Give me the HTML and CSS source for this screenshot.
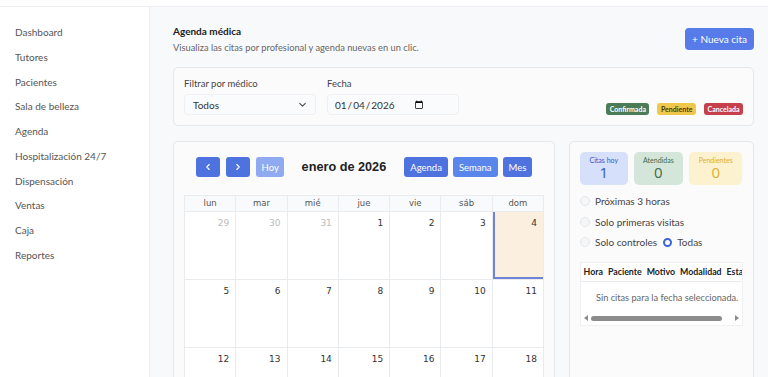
FILE: index.html
```html
<!DOCTYPE html>
<html lang="es">
<head>
  <meta charset="UTF-8">
  <meta name="viewport" content="width=device-width, initial-scale=1.0">
  <title>Agenda médica</title>
  <link rel="stylesheet" href="styles.css">
</head>
<body>
  <div class="topbar"></div>

  <div class="layout">
    <!-- Menú lateral -->
    <aside class="sidebar">
      <a href="#">Dashboard</a>
      <a href="#">Tutores</a>
      <a href="#">Pacientes</a>
      <a href="#">Sala de belleza</a>
      <a href="#">Agenda</a>
      <a href="#">Hospitalización 24/7</a>
      <a href="#">Dispensación</a>
      <a href="#">Ventas</a>
      <a href="#">Caja</a>
      <a href="#">Reportes</a>
    </aside>

    <main class="content">
      <!-- Cabecera -->
      <header class="page-head">
        <div>
          <h1>Agenda médica</h1>
          <p>Visualiza las citas por profesional y agenda nuevas en un clic.</p>
        </div>
        <button class="btn btn-new">+ Nueva cita</button>
      </header>

      <!-- Filtros -->
      <section class="card filters">
        <div class="field">
          <label>Filtrar por médico</label>
          <div class="select">
            <span>Todos</span>
            <svg width="9" height="9" viewBox="0 0 16 16"><path d="M3 6l5 5 5-5" fill="none" stroke="#444" stroke-width="1.8" stroke-linecap="round" stroke-linejoin="round"/></svg>
          </div>
        </div>
        <div class="field">
          <label>Fecha</label>
          <input class="date" type="date" value="2026-01-04">
        </div>
        <div class="legend">
          <span class="badge confirmed">Confirmada</span>
          <span class="badge pending">Pendiente</span>
          <span class="badge cancelled">Cancelada</span>
        </div>
      </section>

      <div class="agenda-row">
        <!-- Calendario -->
        <section class="card calendar">
          <div class="toolbar">
            <div class="group">
              <button class="btn btn-sq"><svg width="8" height="8" viewBox="0 0 16 16"><path d="M10.5 3l-5 5 5 5" fill="none" stroke="#fff" stroke-width="2.2" stroke-linecap="round" stroke-linejoin="round"/></svg></button>
              <button class="btn btn-sq"><svg width="8" height="8" viewBox="0 0 16 16"><path d="M5.5 3l5 5-5 5" fill="none" stroke="#fff" stroke-width="2.2" stroke-linecap="round" stroke-linejoin="round"/></svg></button>
              <button class="btn btn-off">Hoy</button>
            </div>
            <h2>enero de 2026</h2>
            <div class="group tight">
              <button class="btn">Agenda</button>
              <button class="btn btn-light">Semana</button>
              <button class="btn">Mes</button>
            </div>
          </div>

          <div class="month">
            <div class="dow">lun</div><div class="dow">mar</div><div class="dow">mié</div><div class="dow">jue</div><div class="dow">vie</div><div class="dow">sáb</div><div class="dow">dom</div>
            <div class="day other">29</div><div class="day other">30</div><div class="day other">31</div><div class="day">1</div><div class="day">2</div><div class="day">3</div><div class="day today">4</div>
            <div class="day">5</div><div class="day">6</div><div class="day">7</div><div class="day">8</div><div class="day">9</div><div class="day">10</div><div class="day">11</div>
            <div class="day">12</div><div class="day">13</div><div class="day">14</div><div class="day">15</div><div class="day">16</div><div class="day">17</div><div class="day">18</div>
          </div>
        </section>

        <!-- Resumen del día -->
        <aside class="card side">
          <div class="stats">
            <div class="stat blue"><span>Citas hoy</span><strong>1</strong></div>
            <div class="stat green"><span>Atendidas</span><strong>0</strong></div>
            <div class="stat yellow"><span>Pendientes</span><strong>0</strong></div>
          </div>

          <div class="options">
            <div class="opt"><span class="check"></span>Próximas 3 horas</div>
            <div class="opt"><span class="check"></span>Solo primeras visitas</div>
            <div class="opt"><span class="check"></span>Solo controles <span class="radio"></span>Todas</div>
          </div>

          <div class="table-wrap">
            <div class="table-view">
              <table>
                <thead>
                  <tr><th>Hora</th><th>Paciente</th><th>Motivo</th><th>Modalidad</th><th>Estado</th><th>Acciones</th></tr>
                </thead>
                <tbody>
                  <tr><td colspan="6" class="empty">Sin citas para la fecha seleccionada.</td></tr>
                </tbody>
              </table>
            </div>
            <div class="hscroll">
              <span class="arrow left"></span>
              <span class="thumb"></span>
              <span class="arrow right"></span>
            </div>
          </div>
        </aside>
      </div>
    </main>
  </div>
</body>
</html>
```

FILE: styles.css
```css
/* Estilos generales */
body {
  margin: 0;
  font-family: Lato, "Open Sans", sans-serif;
  color: #333;
  background: #f8f9fb;
  overflow: hidden;
}

.topbar {
  height: 6px;
  background: #fff;
  border-bottom: 1px solid #eceef2;
}

.layout {
  display: flex;
  height: calc(100vh - 7px);
}

/* Menú lateral */
.sidebar {
  width: 150px;
  flex-shrink: 0;
  background: #fff;
  border-right: 1px solid #eceef2;
  padding-top: 13px;
  box-sizing: border-box;
}

.sidebar a {
  display: block;
  padding-left: 15px;
  line-height: 24.75px;
  font-size: 10px;
  color: #555;
  text-decoration: none;
}

/* Contenido */
.content {
  flex: 1;
  padding: 15px 14px 0 23px;
  min-width: 0;
}

.page-head {
  display: flex;
  justify-content: space-between;
  align-items: flex-start;
}

.page-head h1 {
  margin: 0;
  font-size: 10px;
  line-height: 18px;
  font-weight: 700;
  color: #222;
}

.page-head p {
  margin: 0;
  font-size: 9.3px;
  line-height: 16px;
  color: #666;
}

.btn {
  border: none;
  border-radius: 3px;
  background: #4e73df;
  color: #fff;
  font-family: inherit;
  font-size: 9.5px;
  height: 20px;
  padding: 0 6px;
  cursor: pointer;
  white-space: nowrap;
}

.btn-new {
  margin-top: 6px;
  height: 22px;
  width: 69px;
  padding: 0;
  font-size: 10px;
  background: #577ce9;
  border-radius: 4px;
}

/* Tarjetas */
.card {
  background: #fbfbfc;
  border: 1px solid #e4e7eb;
  border-radius: 5px;
  box-sizing: border-box;
}

.filters {
  display: flex;
  align-items: flex-end;
  gap: 11px;
  margin-top: 11px;
  padding: 10px;
}

.field label {
  display: block;
  font-size: 9.5px;
  line-height: 12px;
  color: #444;
  margin-bottom: 4px;
}

.select,
.date {
  display: flex;
  width: 132px;
  height: 21px;
  box-sizing: border-box;
  border: 1px solid #eef0f3;
  border-radius: 4px;
  background: #fafbfc;
  font-family: inherit;
  font-size: 10px;
  color: #333;
}

.select {
  justify-content: space-between;
  align-items: center;
  padding: 0 8px;
}

.date {
  padding: 0 6px;
}

.legend {
  margin-left: auto;
  display: flex;
  gap: 8px;
}

.badge {
  font-size: 7px;
  font-weight: 700;
  padding: 2px 3.5px;
  border-radius: 3px;
  color: #fff;
}

.confirmed { background: #4b7b57; }
.pending { background: #efc84b; color: #4a3b05; }
.cancelled { background: #c5404b; }

/* Fila agenda */
.agenda-row {
  display: flex;
  gap: 14px;
  margin-top: 15px;
  align-items: flex-start;
}

.calendar {
  width: 382px;
  flex-shrink: 0;
  padding: 15px 10px 10px 10px;
}

.toolbar {
  display: flex;
  justify-content: center;
  align-items: center;
  gap: 18px;
  margin-bottom: 18px;
}

.group {
  display: flex;
  gap: 6px;
}

.group.tight {
  gap: 5px;
}

.btn-sq {
  width: 24px;
  display: flex;
  align-items: center;
  justify-content: center;
}

.btn-off {
  background: #8faaf0;
  width: 28px;
}

.btn-light {
  background: #5a86ec;
}

.toolbar h2 {
  margin: 0;
  font-family: "Liberation Sans", Arial, sans-serif;
  font-size: 12.7px;
  font-weight: 700;
  color: #222;
  white-space: nowrap;
}

/* Mes */
.month {
  display: grid;
  grid-template-columns: repeat(7, 1fr);
  grid-template-rows: 16px repeat(3, 68px);
  border-top: 1px solid #e9ecef;
  border-left: 1px solid #e9ecef;
  font-family: "DejaVu Sans", sans-serif;
}

.dow,
.day {
  border-right: 1px solid #e9ecef;
  border-bottom: 1px solid #e9ecef;
}

.dow {
  background: #f9fafb;
  text-align: center;
  font-size: 8.5px;
  line-height: 15px;
  color: #555;
}

.day {
  background: #fff;
  text-align: right;
  font-size: 9px;
  padding: 6px 6px 0 0;
  color: #333;
}

.day.other {
  color: #bbb;
}

.day.today {
  background: #fbf0e0;
  box-shadow: inset 2px 0 0 #6f84d6, inset 0 -2px 0 #6f84d6;
}

/* Panel lateral */
.side {
  flex: 1;
  min-width: 0;
  padding: 10px;
  height: 260px;
}

.stats {
  display: flex;
  gap: 6px;
}

.stat {
  display: flex;
  flex-direction: column;
  align-items: center;
  padding: 4px 9.5px 2px;
  border-radius: 5px;
  height: 33px;
  box-sizing: border-box;
}

.stat span {
  font-size: 7px;
}

.stat strong {
  font-weight: 400;
  font-size: 15px;
  line-height: 17px;
  font-family: "Open Sans", sans-serif;
}

.stat.blue { background: #d6e0fb; color: #3556c9; }
.stat.green { background: #d4e6d9; color: #3e6a4b; }
.stat.yellow { background: #fdf2d0; color: #dcae30; }

.options {
  margin-top: 6px;
}

.opt {
  display: flex;
  align-items: center;
  font-size: 10px;
  color: #444;
  height: 20.5px;
}

.check {
  width: 8px;
  height: 8px;
  border-radius: 50%;
  border: 1px solid #e4e6ea;
  background: #f5f6f8;
  margin-right: 5px;
}

.radio {
  width: 5px;
  height: 5px;
  border-radius: 50%;
  border: 2.5px solid #3d63dc;
  background: #fff;
  margin: 0 5px 0 6px;
}

/* Tabla con desplazamiento */
.table-wrap {
  margin-top: 9px;
  border: 1px solid #eef0f3;
  background: #fff;
}

.table-view {
  overflow: hidden;
}

table {
  border-collapse: collapse;
  font-size: 8.8px;
  white-space: nowrap;
}

th {
  font-weight: 700;
  color: #222;
  padding: 3px 2.5px 4px;
  text-align: left;
  border-bottom: 1px solid #e9ecef;
}

td.empty {
  color: #666;
  padding: 10px 15px 9px;
  font-size: 9.2px;
}

.hscroll {
  display: flex;
  align-items: center;
  height: 13px;
  padding: 0 3px;
}

.thumb {
  flex: 1;
  height: 5px;
  margin: 0 13px 0 3px;
  border-radius: 3px;
  background: #8c8c8c;
}

.arrow {
  width: 0;
  height: 0;
  border-top: 3px solid transparent;
  border-bottom: 3px solid transparent;
}

.arrow.left {
  border-right: 4px solid #8c8c8c;
}

.arrow.right {
  border-left: 4px solid #8c8c8c;
}
```
